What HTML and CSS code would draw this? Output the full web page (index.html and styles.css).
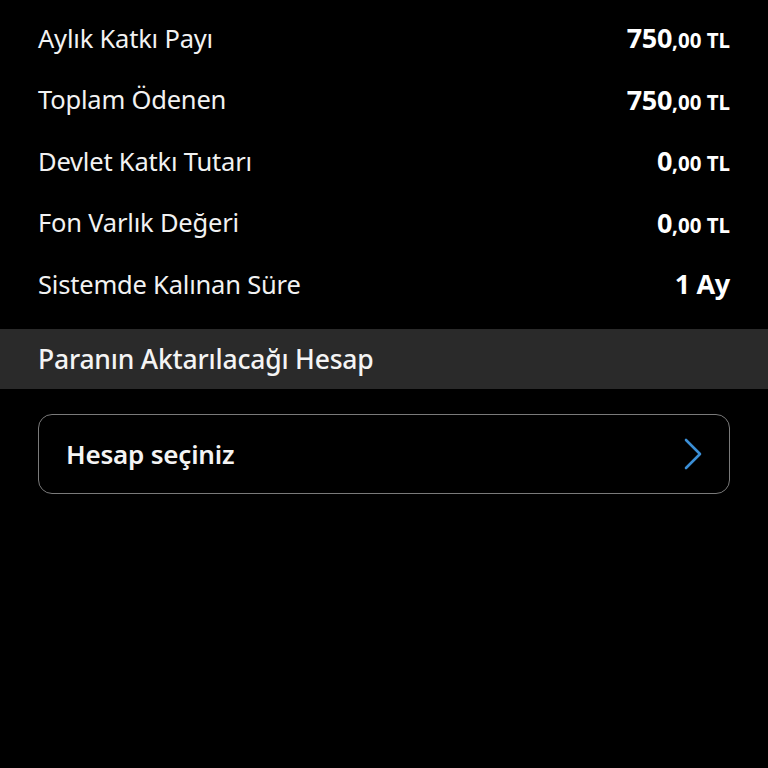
FILE: index.html
```html
<!DOCTYPE html>
<html lang="tr">
<head>
<meta charset="utf-8">
<link rel="stylesheet" href="styles.css">
</head>
<body>
<div class="screen">
  <div class="rows">
    <div class="row"><span class="label">Aylık Katkı Payı</span><span class="value"><span class="big">750</span><span class="small">,00 TL</span></span></div>
    <div class="row"><span class="label">Toplam Ödenen</span><span class="value"><span class="big">750</span><span class="small">,00 TL</span></span></div>
    <div class="row"><span class="label">Devlet Katkı Tutarı</span><span class="value"><span class="big">0</span><span class="small">,00 TL</span></span></div>
    <div class="row"><span class="label">Fon Varlık Değeri</span><span class="value"><span class="big">0</span><span class="small">,00 TL</span></span></div>
    <div class="row"><span class="label">Sistemde Kalınan Süre</span><span class="value"><span class="big">1 Ay</span></span></div>
  </div>
  <div class="section">Paranın Aktarılacağı Hesap</div>
  <div class="select">
    <span class="select-text">Hesap seçiniz</span>
    <svg class="chev" width="20" height="32" viewBox="0 0 20 32"><path d="M3 2 L17 16 L3 30" fill="none" stroke="#3b8fd6" stroke-width="2.6" stroke-linecap="round" stroke-linejoin="round"/></svg>
  </div>
</div>
</body>
</html>
```
FILE: styles.css
```css
html, body {
  margin: 0;
  padding: 0;
  background: #000;
}
body {
  width: 768px;
  height: 768px;
  overflow: hidden;
  font-family: "Noto Sans", "Open Sans", sans-serif;
  color: #f2f2f2;
}
.screen {
  display: flex;
  flex-direction: column;
}
.rows {
  display: flex;
  flex-direction: column;
  padding: 7px 38px 14px 38px;
}
.row {
  height: 61.5px;
  display: flex;
  align-items: center;
  justify-content: space-between;
}
.label {
  font-size: 25.5px;
  font-weight: 400;
  letter-spacing: -0.2px;
}
.value {
  font-weight: 700;
  color: #fff;
  display: flex;
  align-items: baseline;
}
.big {
  font-size: 27px;
  letter-spacing: -0.3px;
}
.small {
  font-size: 20.5px;
}
.section {
  background: #2a2a2a;
  height: 60px;
  display: flex;
  align-items: center;
  padding: 0 38px;
  font-size: 26.5px;
  font-weight: 500;
  letter-spacing: -0.2px;
  color: #f4f4f4;
}
.select {
  margin: 25px 38px 0 38px;
  height: 78px;
  border: 1.5px solid #7a7a7a;
  border-radius: 14px;
  display: flex;
  align-items: center;
  justify-content: space-between;
  padding: 0 26px 0 27px;
}
.select-text {
  font-size: 26px;
  font-weight: 600;
  letter-spacing: -0.2px;
  color: #f4f4f4;
}
.chev {
  display: block;
}
```
